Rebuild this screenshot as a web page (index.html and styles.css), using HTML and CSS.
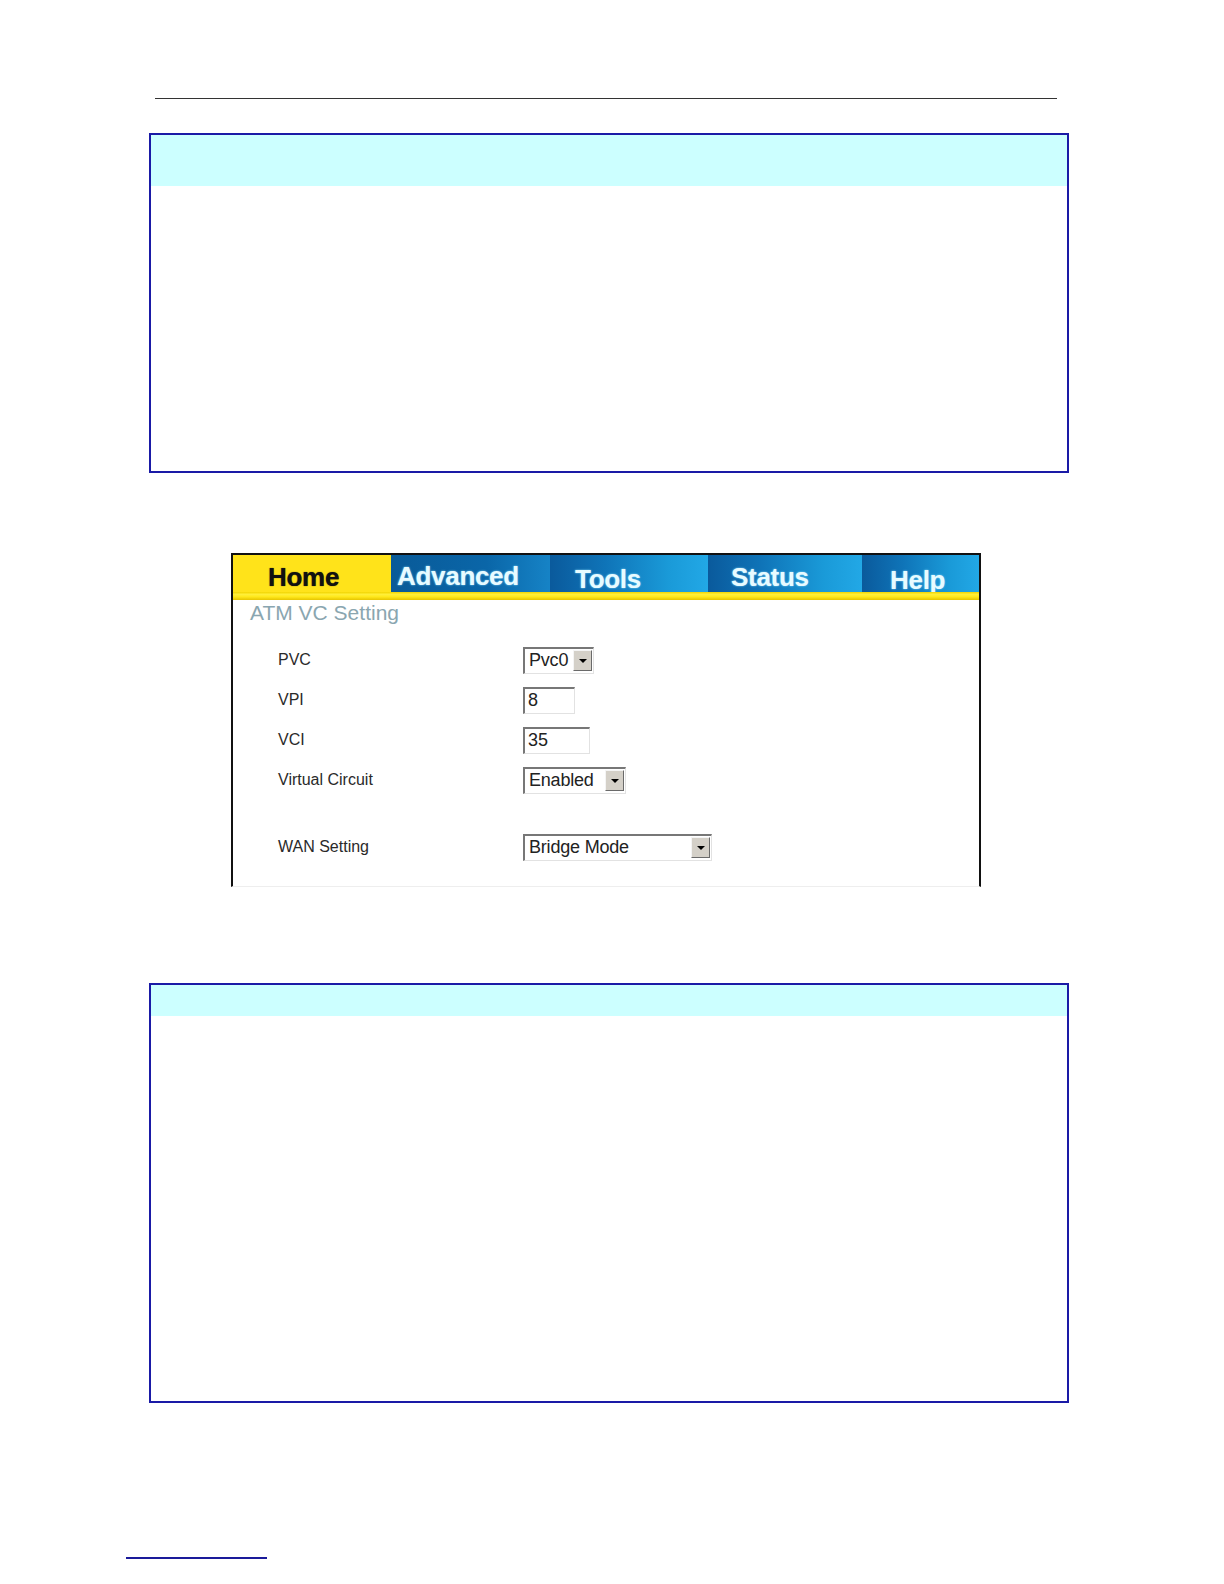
FILE: index.html
```html
<!DOCTYPE html>
<html>
<head>
<meta charset="utf-8">
<link rel="stylesheet" href="styles.css">
</head>
<body>
<div class="page">
  <div class="top-rule"></div>

  <div class="note-box note-box--first">
    <div class="note-head note-head--tall"></div>
    <div class="note-body note-body--first"></div>
  </div>

  <div class="shot">
    <div class="tabs">
      <div class="tab tab--home">Home</div>
      <div class="tab tab--adv">Advanced</div>
      <div class="tab tab--tools">Tools</div>
      <div class="tab tab--status">Status</div>
      <div class="tab tab--help">Help</div>
    </div>
    <div class="tab-strip"></div>
    <div class="shot-body">
      <div class="shot-title">ATM VC Setting</div>
      <div class="form">
        <div class="row">
          <div class="label">PVC</div>
          <div class="select select--pvc"><span class="sel-text">Pvc0</span><span class="arrow"><span class="tri"></span></span></div>
        </div>
        <div class="row">
          <div class="label">VPI</div>
          <div class="input input--vpi">8</div>
        </div>
        <div class="row">
          <div class="label">VCI</div>
          <div class="input input--vci">35</div>
        </div>
        <div class="row">
          <div class="label">Virtual Circuit</div>
          <div class="select select--vc"><span class="sel-text">Enabled</span><span class="arrow"><span class="tri"></span></span></div>
        </div>
        <div class="row row--spaced">
          <div class="label">WAN Setting</div>
          <div class="select select--wan"><span class="sel-text">Bridge Mode</span><span class="arrow"><span class="tri"></span></span></div>
        </div>
      </div>
    </div>
  </div>

  <div class="note-box note-box--second">
    <div class="note-head note-head--short"></div>
    <div class="note-body note-body--second"></div>
  </div>

  <div class="foot-rule"></div>
</div>
</body>
</html>
```

FILE: styles.css
```css
* { box-sizing: border-box; }
html, body { margin: 0; padding: 0; background: #ffffff; }
body { font-family: "Liberation Sans", Arial, sans-serif; }

.page { display: flex; flex-direction: column; align-items: flex-start; }

.top-rule {
  margin-top: 98px;
  margin-left: 155px;
  width: 902px;
  height: 1px;
  background: #333333;
}

.note-box {
  margin-left: 149px;
  width: 920px;
  border: 2px solid #1a1aa6;
  background: #ffffff;
}
.note-box--first { margin-top: 34px; height: 340px; }
.note-box--second { margin-top: 96px; height: 420px; }

.note-head { background: #ccffff; }
.note-head--tall { height: 51px; }
.note-head--short { height: 31px; }

.shot {
  margin-top: 80px;
  margin-left: 231px;
  width: 750px;
  height: 334px;
  border: 2px solid #111111;
  border-bottom: 1px solid #eeeeee;
  background: #ffffff;
  display: flex;
  flex-direction: column;
}

.tabs { display: flex; height: 37px; }
.tab {
  height: 37px;
  font-family: "Liberation Sans", Arial, sans-serif;
  font-weight: bold;
  font-size: 26px;
  line-height: 1;
  color: #e8fbff;
  text-shadow: 0 0 2px #8fe0ff;
  background: linear-gradient(to right, #0a5a9c 0%, #0f74b8 35%, #1a9ad8 75%, #22a8e6 100%);
  letter-spacing: -0.3px;
}
.tab--home {
  width: 158px;
  background: #ffe31a;
  color: #111111;
  text-shadow: 0 0 1px #3a2a00;
  padding: 9px 0 0 35px;
}
.tab--adv { width: 159px; padding: 8px 0 0 6px; background: linear-gradient(to right, #095a98 0%, #0a66a8 60%, #1683c6 100%); }
.tab--tools { width: 158px; padding: 11px 0 0 25px; }
.tab--status { width: 154px; padding: 9px 0 0 23px; }
.tab--help { width: 117px; padding: 12px 0 0 28px; }

.tab-strip {
  height: 8px;
  background: linear-gradient(to bottom, #f2d400 0%, #ffef3a 30%, #ffe81a 60%, #e6c400 100%);
}

.shot-body { padding: 0 0 0 17px; }

.shot-title {
  font-size: 21px;
  line-height: 26px;
  color: #8aa6b0;
  height: 26px;
}

.form { margin-top: 14px; padding-left: 28px; display: flex; flex-direction: column; }

.row { display: flex; align-items: center; height: 40px; }
.row--spaced { margin-top: 27px; }

.label {
  width: 245px;
  font-size: 16px;
  color: #2a2a2a;
}

.select, .input {
  height: 27px;
  border-top: 2px solid #777777;
  border-left: 2px solid #777777;
  border-bottom: 1px solid #e2e2e2;
  border-right: 1px solid #e2e2e2;
  background: #ffffff;
  font-size: 18px;
  color: #222222;
  display: flex;
  align-items: center;
}
.input { padding-left: 3px; }
.input--vpi { width: 52px; }
.input--vci { width: 67px; }

.select { justify-content: space-between; padding-left: 4px; padding-right: 1px; }
.select--pvc { width: 71px; }
.select--vc { width: 103px; }
.select--wan { width: 189px; }

.sel-text { letter-spacing: -0.2px; }

.arrow {
  width: 19px;
  height: 21px;
  background: #d4d0c8;
  border-top: 1px solid #f4f4f4;
  border-left: 1px solid #f4f4f4;
  border-right: 1px solid #6a6a6a;
  border-bottom: 1px solid #6a6a6a;
  display: flex;
  align-items: center;
  justify-content: center;
}
.tri {
  width: 0;
  height: 0;
  border-left: 4px solid transparent;
  border-right: 4px solid transparent;
  border-top: 4px solid #000000;
}

.foot-rule {
  margin-top: 154px;
  margin-left: 126px;
  width: 141px;
  height: 2px;
  background: #1a1a9a;
}
```
